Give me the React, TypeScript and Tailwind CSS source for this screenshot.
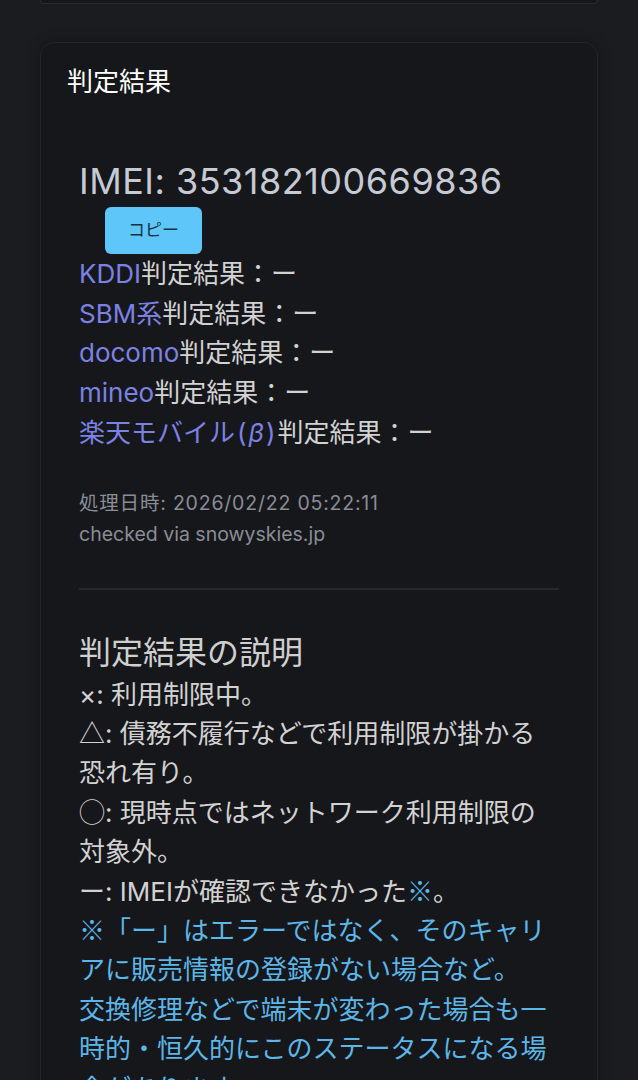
const font = { fontFamily: 'Inter, "Noto Sans CJK JP", sans-serif' };
const cjk = { fontFamily: '"Noto Sans CJK JP", sans-serif' };

const carriers = ["KDDI", "SBM系", "docomo", "mineo"];

function Glyph({ children, className = "" }: { children: string; className?: string }) {
  return (
    <span className={"leading-none " + className} style={cjk}>
      {children}
    </span>
  );
}

export default function App() {
  return (
    <div className="min-h-[1080px] bg-[#1b1c20] pb-10" style={font}>
      {/* bottom edge of the previous card */}
      <div className="mx-[40px] h-[4px] rounded-b-[14px] border-x border-b border-[#2a2b30] bg-[#16171b]" />

      <div className="mx-[40px] mt-[38px] rounded-[14px] border border-[#25262b] bg-[#16171b] px-[26px] pt-[22px] pb-10 shadow-[0_0_12px_rgba(0,0,0,0.35)]">
        <h2 className="text-[26px] leading-[34px] text-white">判定結果</h2>

        <div className="px-3 pt-[60px]">
          <div className="text-[36px] leading-[44px] tracking-[0.5px] text-[#c6cad4]">
            IMEI: 353182100669836
          </div>
          <button className="mt-1 ml-[26px] flex h-[47px] w-[97px] items-center justify-center rounded-[6px] bg-[#5ec6f8] text-[17px] text-[#163044]">
            コピー
          </button>

          <ul className="text-[26px] leading-[39.7px] text-[#d2d2d2]">
            {carriers.map((name) => (
              <li key={name}>
                <span className="text-[#7c82e4]">{name}</span>
                判定結果：ー
              </li>
            ))}
            <li>
              <span className="text-[#7c82e4]">
                楽天モバイル<span className="mx-[2px]">(<i className="px-[2px]">β</i>)</span>
              </span>
              判定結果：ー
            </li>
          </ul>

          <div className="mt-[35px] text-[19.5px] leading-[31px] text-[#8a8d96]">
            <div className="tracking-[0.8px]">処理日時: 2026/02/22 05:22:11</div>
            <div>checked via snowyskies.jp</div>
          </div>

          <div className="mt-[38px] h-[2px] bg-[#26282e]" />

          <h3 className="mt-[41px] text-[32px] leading-[44px] text-[#cfcfcf]">判定結果の説明</h3>
          <div className="w-[480px] text-[26px] leading-[39.4px] text-[#d2d2d2]">
            <p>×: 利用制限中。</p>
            <p>
              <Glyph>△</Glyph>: 債務不履行などで利用制限が掛かる恐れ有り。
            </p>
            <p>
              <Glyph>◯</Glyph>: 現時点ではネットワーク利用制限の対象外。
            </p>
            <p>
              ー: IMEIが確認できなかった<Glyph className="text-[#5cb6e8]">※</Glyph>。
            </p>
            <p className="text-[#5cb6e8]">
              <Glyph>※</Glyph>「ー」はエラーではなく、そのキャリアに販売情報の登録がない場合など。
            </p>
            <p className="text-[#5cb6e8]">
              交換修理などで端末が変わった場合も一時的・恒久的にこのステータスになる場合があります。
            </p>
          </div>
        </div>
      </div>
    </div>
  );
}
